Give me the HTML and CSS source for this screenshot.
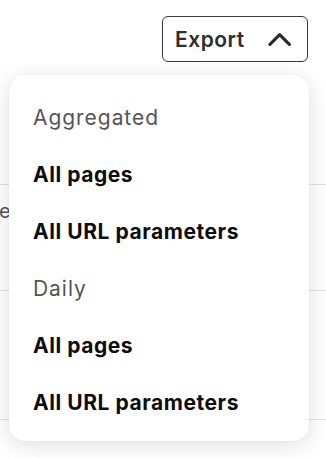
FILE: index.html
```html
<!DOCTYPE html>
<html>
<head>
<meta charset="utf-8">
<link rel="stylesheet" href="styles.css">
</head>
<body>
<div class="page">
  <div class="toolbar">
    <button class="export-btn">
      <span>Export</span>
      <svg class="chev" width="24" height="16" viewBox="0 0 24 16"><path d="M2 13.5 L12 3.5 L22 13.5" fill="none" stroke="#2b2b2b" stroke-width="3.2" stroke-linecap="round" stroke-linejoin="round"/></svg>
    </button>
  </div>
  <div class="table">
    <div class="row r1"></div>
    <div class="row r2"><span class="cell">e</span></div>
    <div class="row r3"></div>
  </div>
  <div class="menu">
    <div class="item heading">Aggregated</div>
    <div class="item">All pages</div>
    <div class="item">All URL parameters</div>
    <div class="item heading">Daily</div>
    <div class="item">All pages</div>
    <div class="item">All URL parameters</div>
  </div>
</div>
</body>
</html>
```
FILE: styles.css
```css
* { box-sizing: border-box; }
html, body { margin: 0; padding: 0; background: #fff; }
body { font-family: Inter, "Noto Sans", sans-serif; width: 326px; height: 458px; overflow: hidden; }
.page { position: relative; width: 326px; height: 458px; }
.toolbar { display: flex; justify-content: flex-end; padding: 16px 18px 0 0; }
.export-btn {
  display: flex; align-items: center; gap: 23px;
  width: 146px; height: 46px; padding: 0 16px 0 12px;
  border: 1.3px solid #3a3a3a; border-radius: 6px; background: #fff;
  font-family: Inter, sans-serif; font-size: 21px; font-weight: 600; color: #2e2e2e;
  letter-spacing: 0.5px;
}
.chev { display: block; margin-top: -1px; }
.table { margin-top: 122px; }
.row { border-top: 1.5px solid #e2e2e2; }
.r1 { height: 106px; position: relative; }
.r2 { height: 129px; }
.cell { position: absolute; left: -1px; top: 199px; font-size: 20px; color: #555; }
.menu {
  position: absolute; left: 9px; top: 75px; width: 300px;
  background: #fff; border-radius: 16px;
  box-shadow: 0 4px 22px rgba(0,0,0,0.13), 0 0 2px rgba(0,0,0,0.05);
  padding: 14px 24px 10px 24px;
  display: flex; flex-direction: column;
}
.item { height: 57px; display: flex; align-items: center; font-size: 21px; font-weight: 700; color: #0d0d0d; letter-spacing: 0.55px; }
.heading { font-weight: 400; color: #555; letter-spacing: 0.95px; }
```
